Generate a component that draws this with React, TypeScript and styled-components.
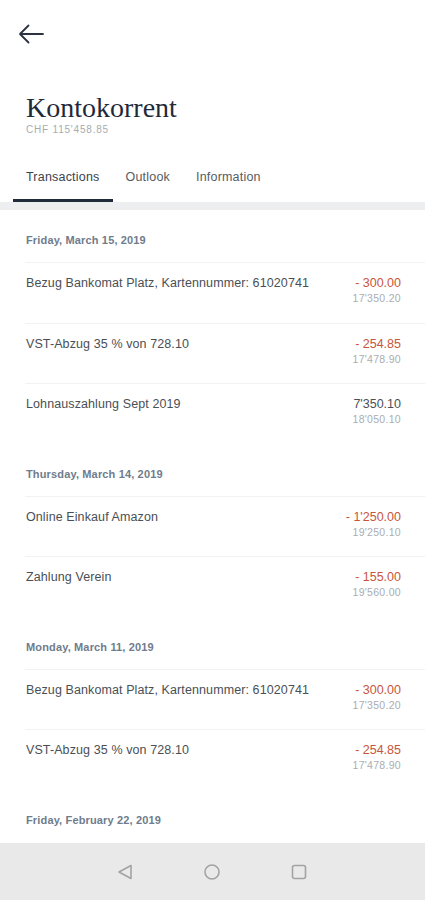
import React from "react";
import styled, { createGlobalStyle } from "styled-components";

const GlobalStyle = createGlobalStyle`
  html, body {
    margin: 0;
    padding: 0;
    background: #fff;
  }
  body {
    font-family: "Liberation Sans", Arial, sans-serif;
    -webkit-font-smoothing: antialiased;
  }
`;

type Tx = {
  label: string;
  amount: string;
  balance: string;
  debit: boolean;
};

type Group = {
  date: string;
  items: Tx[];
};

const groups: Group[] = [
  {
    date: "Friday, March 15, 2019",
    items: [
      { label: "Bezug Bankomat Platz, Kartennummer: 61020741", amount: "- 300.00", balance: "17'350.20", debit: true },
      { label: "VST-Abzug 35 % von 728.10", amount: "- 254.85", balance: "17'478.90", debit: true },
      { label: "Lohnauszahlung Sept 2019", amount: "7'350.10", balance: "18'050.10", debit: false },
    ],
  },
  {
    date: "Thursday, March 14, 2019",
    items: [
      { label: "Online Einkauf Amazon", amount: "- 1'250.00", balance: "19'250.10", debit: true },
      { label: "Zahlung Verein", amount: "- 155.00", balance: "19'560.00", debit: true },
    ],
  },
  {
    date: "Monday, March 11, 2019",
    items: [
      { label: "Bezug Bankomat Platz, Kartennummer: 61020741", amount: "- 300.00", balance: "17'350.20", debit: true },
      { label: "VST-Abzug 35 % von 728.10", amount: "- 254.85", balance: "17'478.90", debit: true },
    ],
  },
  {
    date: "Friday, February 22, 2019",
    items: [],
  },
];

const tabs = ["Transactions", "Outlook", "Information"];

const App: React.FC = () => {
  return (
    <>
      <GlobalStyle />
      <Screen>
        <Header>
          <BackButton aria-label="back">
            <svg width="26" height="20" viewBox="0 0 26 20" fill="none">
              <path d="M25 10H2M10.5 1.5L2 10l8.5 8.5" stroke="#2b3340" strokeWidth="1.8" strokeLinecap="round" strokeLinejoin="round" />
            </svg>
          </BackButton>
          <Title>Kontokorrent</Title>
          <Balance>CHF 115'458.85</Balance>
        </Header>

        <TabBar>
          {tabs.map((t, i) => (
            <Tab key={t} active={i === 0}>
              {t}
            </Tab>
          ))}
        </TabBar>
        <Divider />

        <List>
          {groups.map((g) => (
            <section key={g.date}>
              <DateHeader>{g.date}</DateHeader>
              {g.items.map((tx, i) => (
                <Row key={i}>
                  <Label>{tx.label}</Label>
                  <Amounts>
                    <Amount debit={tx.debit}>{tx.amount}</Amount>
                    <RunningBalance>{tx.balance}</RunningBalance>
                  </Amounts>
                </Row>
              ))}
            </section>
          ))}
        </List>

        <NavBar>
          <svg width="18" height="18" viewBox="0 0 18 18" fill="none">
            <path d="M15 2.5v13L3 9z" stroke="#a3a3a3" strokeWidth="1.6" strokeLinejoin="round" />
          </svg>
          <svg width="18" height="18" viewBox="0 0 18 18" fill="none">
            <circle cx="9" cy="9" r="7" stroke="#a3a3a3" strokeWidth="1.6" />
          </svg>
          <svg width="18" height="18" viewBox="0 0 18 18" fill="none">
            <rect x="2.5" y="2.5" width="13" height="13" rx="2" stroke="#a3a3a3" strokeWidth="1.6" />
          </svg>
        </NavBar>
      </Screen>
    </>
  );
};

const Screen = styled.div`
  width: 100%;
  height: 100vh;
  display: flex;
  flex-direction: column;
  overflow: hidden;
  background: #fff;
`;

const Header = styled.header`
  display: flex;
  flex-direction: column;
  align-items: flex-start;
  padding: 22px 26px 0;
`;

const BackButton = styled.button`
  display: flex;
  align-items: center;
  justify-content: center;
  margin-left: -10px;
  padding: 2px;
  height: 24px;
  background: none;
  border: 0;
`;

const Title = styled.h1`
  margin: 46px 0 0;
  font-family: "Liberation Serif", "Times New Roman", serif;
  font-weight: 400;
  font-size: 28px;
  line-height: 32px;
  color: #1e2a3a;
`;

const Balance = styled.div`
  margin-top: 0;
  font-size: 10px;
  line-height: 12px;
  letter-spacing: 0.8px;
  color: #a8acb0;
`;

const TabBar = styled.nav`
  display: flex;
  padding: 0 13px;
  margin-top: 24px;
`;

const Tab = styled.div<{ active?: boolean }>`
  padding: 9px 13px 0;
  height: 42px;
  box-sizing: border-box;
  font-size: 12.5px;
  line-height: 16px;
  letter-spacing: 0.2px;
  color: ${(p) => (p.active ? "#3a4350" : "#565c63")};
  border-bottom: 3px solid ${(p) => (p.active ? "#1f2b3b" : "transparent")};
`;

const Divider = styled.div`
  height: 8px;
  background: #eceef0;
  flex-shrink: 0;
`;

const List = styled.main`
  flex: 1;
  overflow: hidden;
`;

const DateHeader = styled.h3`
  margin: 0;
  padding: 23px 26px 15px;
  font-size: 11px;
  line-height: 14px;
  font-weight: 700;
  letter-spacing: 0.15px;
  color: #6f7c8c;
`;

const Row = styled.div`
  display: flex;
  justify-content: space-between;
  align-items: flex-start;
  height: 60.5px;
  box-sizing: border-box;
  margin-left: 25px;
  padding: 12px 24px 0 1px;
  border-top: 1px solid #f1f2f3;
`;

const Label = styled.div`
  font-size: 12.5px;
  line-height: 16px;
  color: #4a4f55;
  letter-spacing: 0.1px;
`;

const Amounts = styled.div`
  display: flex;
  flex-direction: column;
  align-items: flex-end;
`;

const Amount = styled.div<{ debit: boolean }>`
  font-size: 12.5px;
  line-height: 16px;
  color: ${(p) => (p.debit ? "#c8553a" : "#4a4f55")};
`;

const RunningBalance = styled.div`
  font-size: 10.5px;
  line-height: 14px;
  letter-spacing: 0.3px;
  color: #a9adb2;
`;

const NavBar = styled.footer`
  height: 57px;
  flex-shrink: 0;
  display: flex;
  align-items: center;
  justify-content: center;
  gap: 69px;
  background: #e9e9e9;
  padding-right: 2px;
`;

export default App;
